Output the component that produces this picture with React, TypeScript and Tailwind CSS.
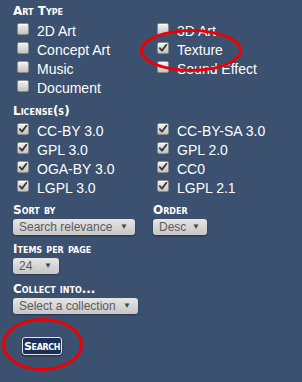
import React from "react";

function Heading({ children }: { children: React.ReactNode }) {
  return (
    <div className="font-['DejaVu_Sans',sans-serif] font-bold text-[12px] leading-[17px] text-white [font-variant:small-caps]">
      {children}
    </div>
  );
}

function Box({ checked }: { checked?: boolean }) {
  return (
    <span className="mt-[1px] ml-[4px] flex h-[12px] w-[12px] shrink-0 items-center justify-center rounded-[2px] border border-[#8c8c8c] bg-gradient-to-b from-[#f2f2f2] to-[#c4c4c4] shadow-[inset_0_1px_0_#ffffff]">
      {checked && (
        <svg width="10" height="10" viewBox="0 0 10 10">
          <path d="M1.8 5.2 L4 7.6 L8.4 1.8" stroke="#3a3a3a" strokeWidth="1.9" fill="none" strokeLinecap="round" strokeLinejoin="round" />
        </svg>
      )}
    </span>
  );
}

function Check({ label, checked }: { label: string; checked?: boolean }) {
  return (
    <div className="flex h-[19px] items-start">
      <Box checked={checked} />
      <span className="ml-[8px] text-[14px] leading-[19px] text-white">{label}</span>
    </div>
  );
}

function Select({ text, w }: { text: string; w: string }) {
  return (
    <div
      className={`${w} flex h-[16px] items-center justify-between rounded-[3px] bg-gradient-to-b from-[#e6e6e6] to-[#c6c6c6] pl-[6px] pr-[7px] shadow-[0_1px_2px_rgba(0,0,0,0.35)]`}
    >
      <span className="text-[12px] leading-[16px] text-[#5c5c5c]">{text}</span>
      <span className="text-[8px] leading-[16px] text-[#444]">▼</span>
    </div>
  );
}

export default function App() {
  return (
    <div className="relative h-[382px] w-[302px] overflow-hidden bg-[#3c5070] pl-[13px] pt-[3px] font-['Liberation_Sans',Arial,sans-serif]">
      <Heading>Art Type</Heading>
      <div className="mt-[2px] grid grid-cols-[140px_140px]">
        <div className="flex flex-col">
          <Check label="2D Art" />
          <Check label="Concept Art" />
          <Check label="Music" />
          <Check label="Document" />
        </div>
        <div className="flex flex-col">
          <Check label="3D Art" />
          <Check label="Texture" checked />
          <Check label="Sound Effect" />
        </div>
      </div>

      <div className="mt-[5px]">
        <Heading>License(s)</Heading>
      </div>
      <div className="mt-[2px] grid grid-cols-[140px_140px]">
        <div className="flex flex-col">
          <Check label="CC-BY 3.0" checked />
          <Check label="GPL 3.0" checked />
          <Check label="OGA-BY 3.0" checked />
          <Check label="LGPL 3.0" checked />
        </div>
        <div className="flex flex-col">
          <Check label="CC-BY-SA 3.0" checked />
          <Check label="GPL 2.0" checked />
          <Check label="CC0" checked />
          <Check label="LGPL 2.1" checked />
        </div>
      </div>

      <div className="mt-[4px] grid grid-cols-[140px_140px]">
        <div>
          <Heading>Sort by</Heading>
          <Select text="Search relevance" w="w-[122px]" />
        </div>
        <div>
          <Heading>Order</Heading>
          <Select text="Desc" w="w-[54px]" />
        </div>
      </div>

      <div className="mt-[6px]">
        <Heading>Items per page</Heading>
        <Select text="24" w="w-[46px]" />
      </div>

      <div className="mt-[7px]">
        <Heading>Collect into...</Heading>
        <Select text="Select a collection" w="w-[125px]" />
      </div>

      <div className="mt-[23px] pl-[9px]">
        <button className="flex h-[18px] w-[40px] items-center justify-center rounded-[3px] border border-[#e8e8e8] bg-[#1b3058] font-['DejaVu_Sans',sans-serif] text-[11px] font-bold leading-none tracking-[-0.4px] text-white shadow-[0_1px_2px_rgba(0,0,0,0.5)] [font-variant:small-caps]">
          Search
        </button>
      </div>

      <div className="absolute left-[140px] top-[29px] h-[43px] w-[102px] rounded-[50%] border-[3px] border-[#ee0000]" />
      <div className="absolute left-[2px] top-[318px] h-[53px] w-[81px] rounded-[50%] border-[3px] border-[#ee0000]" />
    </div>
  );
}
